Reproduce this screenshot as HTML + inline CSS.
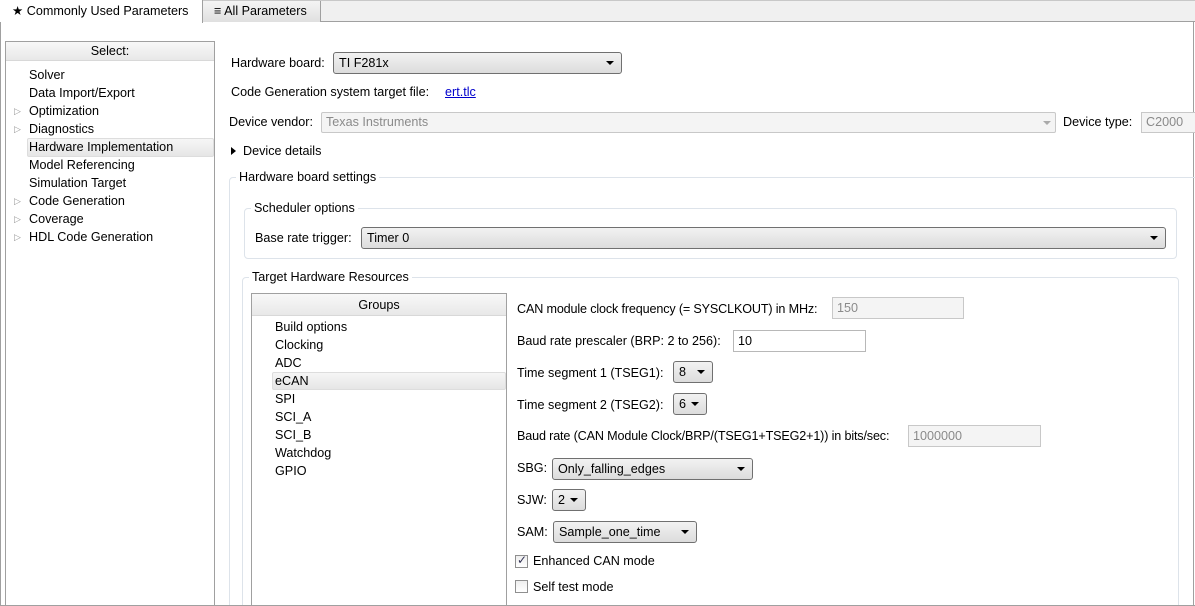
<!DOCTYPE html>
<html style="height:606px;overflow:hidden"><head><style>
*{box-sizing:border-box;margin:0;padding:0}
body{width:1195px;height:606px;overflow:hidden;background:#fff;font-family:"Liberation Sans",sans-serif;font-size:12.6px;color:#000;position:relative}
.a{position:absolute;white-space:nowrap}
.lbl{position:absolute;white-space:nowrap;line-height:17px}
.sel{position:absolute;border:1px solid #707070;border-radius:3px;background:linear-gradient(#f2f2f2,#dcdcdc);line-height:20px;padding-left:5px}
.sel:after{content:"";position:absolute;right:7px;top:8px;border-left:4px solid transparent;border-right:4px solid transparent;border-top:4px solid #000}
.dis{position:absolute;border:1px solid #c8c8c8;background:#f4f4f4;color:#8a8a8a;line-height:19px;padding-left:4px}
.fs{position:absolute;border:1px solid #dde3ea;border-radius:4px}
.leg{position:absolute;background:#fff;padding:0 3px;line-height:17px}
.cb{position:absolute;width:13px;height:13px;border:1px solid #8f8f8f;background:linear-gradient(#eee,#fff)}
</style></head><body>
<div class="a" style="left:0;top:0;width:1195px;height:22px;background:#f0f0f0;border-bottom:1px solid #a0a0a0;border-top:1px solid #c8c8c8"></div>
<div class="a" style="left:0;top:0;width:203px;height:23px;background:#fff;border-right:1px solid #a0a0a0;line-height:22px;padding-left:12px">★ Commonly Used Parameters</div>
<div class="a" style="left:203px;top:1px;width:118px;height:21px;background:linear-gradient(#f4f4f4,#e0e0e0);border-right:1px solid #a0a0a0;line-height:21px;padding-left:11px">≡ All Parameters</div>
<div class="a" style="left:1193px;top:22px;width:1px;height:584px;background:#a0a0a0"></div>
<div class="a" style="left:0;top:22px;width:1px;height:584px;background:#a0a0a0"></div>
<div class="a" style="left:5px;top:41px;width:210px;height:570px;border:1px solid #a0a0a0"></div>
<div class="a" style="left:6px;top:42px;width:208px;height:19px;background:linear-gradient(#f8f8f8,#e8e8e8);border-bottom:1px solid #d8d8d8;text-align:center;line-height:18px">Select:</div>
<div class="a" style="left:27px;top:138px;width:187px;height:19px;background:linear-gradient(#f6f6f6,#e6e6e6);border:1px solid #ddd;border-radius:2px"></div>
<div class="lbl" style="left:29px;top:67px">Solver</div>
<div class="lbl" style="left:29px;top:85px">Data Import/Export</div>
<div class="lbl" style="left:29px;top:103px">Optimization</div>
<div class="lbl" style="left:29px;top:121px">Diagnostics</div>
<div class="lbl" style="left:29px;top:139px">Hardware Implementation</div>
<div class="lbl" style="left:29px;top:157px">Model Referencing</div>
<div class="lbl" style="left:29px;top:175px">Simulation Target</div>
<div class="lbl" style="left:29px;top:193px">Code Generation</div>
<div class="lbl" style="left:29px;top:211px">Coverage</div>
<div class="lbl" style="left:29px;top:229px">HDL Code Generation</div>
<div class="lbl" style="left:14px;top:103px;color:#999;font-size:9px">▷</div>
<div class="lbl" style="left:14px;top:121px;color:#999;font-size:9px">▷</div>
<div class="lbl" style="left:14px;top:193px;color:#999;font-size:9px">▷</div>
<div class="lbl" style="left:14px;top:211px;color:#999;font-size:9px">▷</div>
<div class="lbl" style="left:14px;top:229px;color:#999;font-size:9px">▷</div>
<div class="lbl" style="left:231px;top:55px">Hardware board:</div>
<div class="sel" style="left:333px;top:52px;width:289px;height:22px">TI F281x</div>
<div class="lbl" style="left:231px;top:84px">Code Generation system target file:</div>
<div class="lbl" style="left:445px;top:84px;color:#00c;text-decoration:underline">ert.tlc</div>
<div class="lbl" style="left:229px;top:114px">Device vendor:</div>
<div class="dis" style="left:321px;top:112px;width:735px;height:21px;border-radius:2px">Texas Instruments</div>
<div class="a" style="left:1043px;top:121px;border-left:4px solid transparent;border-right:4px solid transparent;border-top:4px solid #aaa"></div>
<div class="lbl" style="left:1063px;top:114px">Device type:</div>
<div class="dis" style="left:1141px;top:112px;width:60px;height:21px">C2000</div>
<div class="a" style="left:231px;top:147px;border-top:4px solid transparent;border-bottom:4px solid transparent;border-left:5px solid #000"></div>
<div class="lbl" style="left:243px;top:143px">Device details</div>
<div class="fs" style="left:229px;top:177px;width:980px;height:450px"></div>
<div class="leg" style="left:236px;top:169px">Hardware board settings</div>
<div class="fs" style="left:244px;top:208px;width:933px;height:51px"></div>
<div class="leg" style="left:251px;top:200px">Scheduler options</div>
<div class="lbl" style="left:255px;top:230px">Base rate trigger:</div>
<div class="sel" style="left:361px;top:227px;width:805px;height:22px">Timer 0</div>
<div class="fs" style="left:242px;top:277px;width:937px;height:350px"></div>
<div class="leg" style="left:249px;top:269px">Target Hardware Resources</div>
<div class="a" style="left:251px;top:293px;width:256px;height:330px;border:1px solid #a0a0a0"></div>
<div class="a" style="left:252px;top:294px;width:254px;height:22px;background:linear-gradient(#f8f8f8,#e8e8e8);border-bottom:1px solid #d8d8d8;text-align:center;line-height:22px">Groups</div>
<div class="a" style="left:272px;top:372px;width:234px;height:18px;background:linear-gradient(#f6f6f6,#e6e6e6);border:1px solid #ddd;border-radius:2px"></div>
<div class="lbl" style="left:275px;top:319px">Build options</div>
<div class="lbl" style="left:275px;top:337px">Clocking</div>
<div class="lbl" style="left:275px;top:355px">ADC</div>
<div class="lbl" style="left:275px;top:373px">eCAN</div>
<div class="lbl" style="left:275px;top:391px">SPI</div>
<div class="lbl" style="left:275px;top:409px">SCI_A</div>
<div class="lbl" style="left:275px;top:427px">SCI_B</div>
<div class="lbl" style="left:275px;top:445px">Watchdog</div>
<div class="lbl" style="left:275px;top:463px">GPIO</div>
<div class="lbl" style="left:517px;top:301px;letter-spacing:-0.15px">CAN module clock frequency (= SYSCLKOUT) in MHz:</div>
<div class="dis" style="left:832px;top:297px;width:132px;height:22px;line-height:20px">150</div>
<div class="lbl" style="left:517px;top:333px">Baud rate prescaler (BRP: 2 to 256):</div>
<div class="a" style="left:733px;top:330px;width:133px;height:22px;border:1px solid #b8b8b8;line-height:20px;padding-left:4px">10</div>
<div class="lbl" style="left:517px;top:365px">Time segment 1 (TSEG1):</div>
<div class="sel" style="left:673px;top:361px;width:40px;height:22px">8</div>
<div class="lbl" style="left:517px;top:397px">Time segment 2 (TSEG2):</div>
<div class="sel" style="left:673px;top:393px;width:34px;height:22px">6</div>
<div class="lbl" style="left:517px;top:428px;letter-spacing:-0.15px">Baud rate (CAN Module Clock/BRP/(TSEG1+TSEG2+1)) in bits/sec:</div>
<div class="dis" style="left:908px;top:425px;width:133px;height:22px;line-height:20px">1000000</div>
<div class="lbl" style="left:517px;top:460px">SBG:</div>
<div class="sel" style="left:552px;top:458px;width:201px;height:22px">Only_falling_edges</div>
<div class="lbl" style="left:517px;top:492px">SJW:</div>
<div class="sel" style="left:552px;top:489px;width:34px;height:22px">2</div>
<div class="lbl" style="left:517px;top:524px">SAM:</div>
<div class="sel" style="left:553px;top:521px;width:144px;height:22px">Sample_one_time</div>
<div class="cb" style="left:515px;top:555px"></div>
<div class="a" style="left:517px;top:553px;font-size:12px;color:#335">✓</div>
<div class="lbl" style="left:533px;top:553px">Enhanced CAN mode</div>
<div class="cb" style="left:515px;top:580px"></div>
<div class="lbl" style="left:533px;top:579px">Self test mode</div>
<div class="a" style="left:0;top:605px;width:1195px;height:1px;background:#a0a0a0"></div>
</body></html>
